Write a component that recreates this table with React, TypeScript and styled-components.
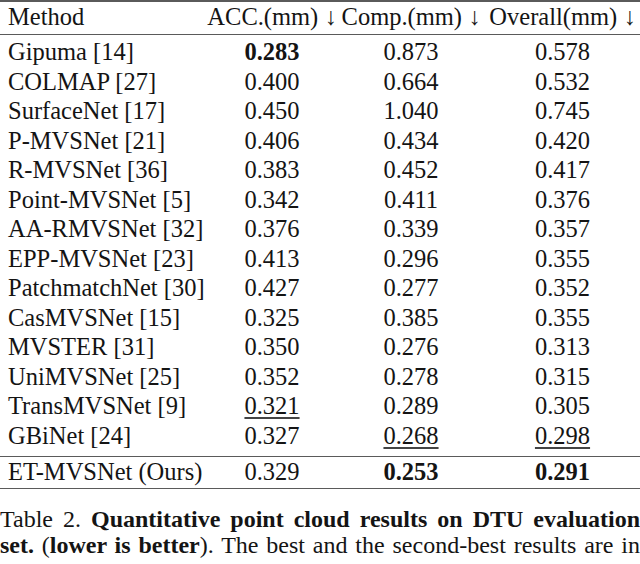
import React from 'react';
import styled, { createGlobalStyle } from 'styled-components';

const GlobalStyle = createGlobalStyle`
    html, body {
        margin: 0;
        padding: 0;
        background: #ffffff;
    }
    body {
        font-family: "Liberation Serif", "Times New Roman", serif;
        color: #141414;
        width: 640px;
        overflow: hidden;
    }
`;

const Page = styled.div`
    width: 640px;
    display: flex;
    flex-direction: column;
`;

const Table = styled.table`
    width: 640px;
    table-layout: fixed;
    border-collapse: collapse;
    border-top: 2px solid #5a5a5a;
    border-bottom: 1px solid #5a5a5a;
    font-size: 24.5px;
    line-height: 29.5px;
`;

const HeadCell = styled.th<{ $left?: boolean }>`
    font-weight: normal;
    padding: 0 0 2.5px ${(p) => (p.$left ? '8px' : '0')};
    text-align: ${(p) => (p.$left ? 'left' : 'center')};
    border-bottom: 1px solid #5a5a5a;
    white-space: nowrap;
`;

const Row = styled.tr<{ $first?: boolean; $last?: boolean; $ours?: boolean }>`
    td {
        padding-top: ${(p) => (p.$first ? '2px' : '0')};
        padding-bottom: ${(p) => (p.$last ? '5.5px' : p.$ours ? '1.5px' : '0')};
        border-top: ${(p) => (p.$ours ? '1px solid #5a5a5a' : 'none')};
    }
`;

const MethodCell = styled.td`
    padding-left: 8px;
    text-align: left;
    white-space: nowrap;
`;

const ValueCell = styled.td`
    text-align: center;
    white-space: nowrap;
`;

const Value = styled.span<{ $best?: boolean; $second?: boolean }>`
    font-weight: ${(p) => (p.$best ? 'bold' : 'normal')};
    text-decoration: ${(p) => (p.$second ? 'underline' : 'none')};
    text-decoration-thickness: 1.5px;
    text-underline-offset: 3px;
    text-decoration-color: #444;
`;

const Caption = styled.p`
    margin: 17px 0 0;
    font-size: 24px;
    line-height: 26px;
`;

const CaptionLine = styled.span`
    display: block;
    text-align: justify;
    text-align-last: justify;
    white-space: nowrap;
`;

type Mark = 'best' | 'second' | undefined;

interface Result {
    method: string;
    acc: [string, Mark?];
    comp: [string, Mark?];
    overall: [string, Mark?];
}

const results: Result[] = [
    { method: 'Gipuma [14]', acc: ['0.283', 'best'], comp: ['0.873'], overall: ['0.578'] },
    { method: 'COLMAP [27]', acc: ['0.400'], comp: ['0.664'], overall: ['0.532'] },
    { method: 'SurfaceNet [17]', acc: ['0.450'], comp: ['1.040'], overall: ['0.745'] },
    { method: 'P-MVSNet [21]', acc: ['0.406'], comp: ['0.434'], overall: ['0.420'] },
    { method: 'R-MVSNet [36]', acc: ['0.383'], comp: ['0.452'], overall: ['0.417'] },
    { method: 'Point-MVSNet [5]', acc: ['0.342'], comp: ['0.411'], overall: ['0.376'] },
    { method: 'AA-RMVSNet [32]', acc: ['0.376'], comp: ['0.339'], overall: ['0.357'] },
    { method: 'EPP-MVSNet [23]', acc: ['0.413'], comp: ['0.296'], overall: ['0.355'] },
    { method: 'PatchmatchNet [30]', acc: ['0.427'], comp: ['0.277'], overall: ['0.352'] },
    { method: 'CasMVSNet [15]', acc: ['0.325'], comp: ['0.385'], overall: ['0.355'] },
    { method: 'MVSTER [31]', acc: ['0.350'], comp: ['0.276'], overall: ['0.313'] },
    { method: 'UniMVSNet [25]', acc: ['0.352'], comp: ['0.278'], overall: ['0.315'] },
    { method: 'TransMVSNet [9]', acc: ['0.321', 'second'], comp: ['0.289'], overall: ['0.305'] },
    { method: 'GBiNet [24]', acc: ['0.327'], comp: ['0.268', 'second'], overall: ['0.298', 'second'] },
    { method: 'ET-MVSNet (Ours)', acc: ['0.329'], comp: ['0.253', 'best'], overall: ['0.291', 'best'] }
];

const Cell = ({ v }: { v: [string, Mark?] }) => (
    <ValueCell>
        <Value $best={v[1] === 'best'} $second={v[1] === 'second'}>
            {v[0]}
        </Value>
    </ValueCell>
);

const App = () => {
    const last = results.length - 1;
    return (
        <>
            <GlobalStyle />
            <Page>
                <Table>
                    <colgroup>
                        <col style={{ width: 207 }} />
                        <col style={{ width: 130 }} />
                        <col style={{ width: 148 }} />
                        <col style={{ width: 155 }} />
                    </colgroup>
                    <thead>
                        <tr>
                            <HeadCell $left>Method</HeadCell>
                            <HeadCell>ACC.(mm) ↓</HeadCell>
                            <HeadCell>Comp.(mm) ↓</HeadCell>
                            <HeadCell>Overall(mm) ↓</HeadCell>
                        </tr>
                    </thead>
                    <tbody>
                        {results.map((r, i) => (
                            <Row
                                key={r.method}
                                $first={i === 0}
                                $last={i === last - 1}
                                $ours={i === last}
                            >
                                <MethodCell>{r.method}</MethodCell>
                                <Cell v={r.acc} />
                                <Cell v={r.comp} />
                                <Cell v={r.overall} />
                            </Row>
                        ))}
                    </tbody>
                </Table>
                <Caption>
                    <CaptionLine>
                        Table 2. <b>Quantitative point cloud results on DTU evaluation</b>
                    </CaptionLine>
                    <CaptionLine>
                        <b>set.</b> (<b>lower is better</b>). The best and the second-best results are in
                    </CaptionLine>
                </Caption>
            </Page>
        </>
    );
};

export default App;
